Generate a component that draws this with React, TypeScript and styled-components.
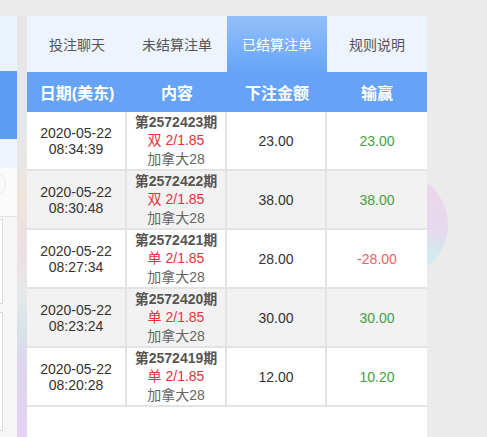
import React from "react";
import styled, { createGlobalStyle } from "styled-components";

const GlobalStyle = createGlobalStyle`
	body {
		margin: 0;
		background: #ebebeb;
		font-family: "Liberation Sans", "Noto Sans CJK SC", sans-serif;
	}
`;

const Page = styled.div`
	position: relative;
	width: 487px;
	height: 437px;
	overflow: hidden;
	display: flex;
	padding-top: 16px;
	box-sizing: border-box;
	background: #ebebeb;
`;

const SidePanel = styled.div`
	width: 17px;
	display: flex;
	flex-direction: column;
	background: #f6f6f6;
`;
const SideTabs = styled.div`
	height: 56px;
	background: #eaf2fd;
`;
const SideBand = styled.div`
	height: 70px;
	background: #5e9df5;
`;
const SideLight = styled.div`
	height: 30px;
	background: #eef4fd;
`;
const SideSearch = styled.div`
	position: relative;
	height: 49px;
	background: #fbfbfb;
	border-bottom: 1px solid #e2e2e2;
	overflow: hidden;
`;
const SideRound = styled.div`
	position: absolute;
	right: 11px;
	top: 5px;
	width: 20px;
	height: 20px;
	border-radius: 50%;
	border: 1px solid #e6e6e6;
`;
const SideBox = styled.div<{ $h: number }>`
	height: ${(p) => p.$h}px;
	margin: 2px 14px 6px -4px;
	background: #fff;
	border: 1px solid #dcdcdc;
`;

const Gutter = styled.div`
	width: 10px;
	background: linear-gradient(
		180deg,
		#e6e6e6 0%,
		#e7e7e7 33%,
		#efe4dc 42%,
		#eee0e4 55%,
		#e6e8ea 66%,
		#d6e4ea 74%,
		#ddd6ec 82%,
		#e4d2f2 100%
	);
`;

const Blob = styled.div`
	position: absolute;
	left: 344px;
	top: 173px;
	width: 104px;
	height: 104px;
	border-radius: 50%;
	background: linear-gradient(200deg, #f0d2ea 0%, #e4d8ee 45%, #cfeaee 60%, #d6eef0 100%);
	opacity: 0.9;
`;

const Panel = styled.div`
	position: relative;
	z-index: 1;
	width: 400px;
	background: #fff;
`;

const Tabs = styled.div`
	display: grid;
	grid-template-columns: repeat(4, 100px);
	height: 56px;
	background: #edf4fe;
`;
const Tab = styled.div<{ $active?: boolean }>`
	display: flex;
	align-items: center;
	justify-content: center;
	font-size: 14px;
	color: ${(p) => (p.$active ? "#fff" : "#555")};
	background: ${(p) =>
		p.$active ? "linear-gradient(180deg, #93bff9 0%, #67a4f8 100%)" : "transparent"};
`;

const Grid = styled.div`
	display: grid;
	grid-template-columns: repeat(4, 100px);
`;
const Head = styled(Grid)`
	height: 40px;
	background: #66a3f7;
`;
const HeadCell = styled.div`
	display: flex;
	align-items: center;
	justify-content: center;
	font-size: 16px;
	font-weight: bold;
	color: #fff;
`;

const Row = styled(Grid)<{ $alt: boolean }>`
	background: ${(p) => (p.$alt ? "#f2f2f2" : "#fff")};
`;
const Cell = styled.div<{ $color?: string }>`
	height: 59px;
	box-sizing: border-box;
	display: flex;
	flex-direction: column;
	align-items: center;
	justify-content: center;
	font-size: 14px;
	line-height: 16px;
	color: ${(p) => p.$color || "#333"};
	border-right: 2px solid #e3e3e3;
	border-bottom: 2px solid #e3e3e3;
	&:last-child {
		border-right: none;
	}
`;
const Line = styled.div<{ $kind: "no" | "pick" | "game" }>`
	line-height: 18.5px;
	font-weight: ${(p) => (p.$kind === "no" ? "bold" : "normal")};
	color: ${(p) => (p.$kind === "no" ? "#555" : p.$kind === "pick" ? "#e6323a" : "#666")};
`;

type Bet = {
	date: string;
	time: string;
	no: string;
	pick: string;
	amount: string;
	win: string;
};

const bets: Bet[] = [
	{ date: "2020-05-22", time: "08:34:39", no: "2572423", pick: "双 2/1.85", amount: "23.00", win: "23.00" },
	{ date: "2020-05-22", time: "08:30:48", no: "2572422", pick: "双 2/1.85", amount: "38.00", win: "38.00" },
	{ date: "2020-05-22", time: "08:27:34", no: "2572421", pick: "单 2/1.85", amount: "28.00", win: "-28.00" },
	{ date: "2020-05-22", time: "08:23:24", no: "2572420", pick: "单 2/1.85", amount: "30.00", win: "30.00" },
	{ date: "2020-05-22", time: "08:20:28", no: "2572419", pick: "单 2/1.85", amount: "12.00", win: "10.20" },
];

const tabs = ["投注聊天", "未结算注单", "已结算注单", "规则说明"];
const heads = ["日期(美东)", "内容", "下注金额", "输赢"];

export default function App() {
	return (
		<Page>
			<GlobalStyle />
			<SidePanel>
				<SideTabs />
				<SideBand />
				<SideLight />
				<SideSearch>
					<SideRound />
				</SideSearch>
				<SideBox $h={86} />
				<SideBox $h={120} />
			</SidePanel>
			<Gutter />
			<Blob />
			<Panel>
				<Tabs>
					{tabs.map((t, i) => (
						<Tab key={t} $active={i === 2}>
							{t}
						</Tab>
					))}
				</Tabs>
				<Head>
					{heads.map((h) => (
						<HeadCell key={h}>{h}</HeadCell>
					))}
				</Head>
				{bets.map((b, i) => (
					<Row key={b.no} $alt={i % 2 === 1}>
						<Cell>
							<div>{b.date}</div>
							<div>{b.time}</div>
						</Cell>
						<Cell>
							<Line $kind="no">第{b.no}期</Line>
							<Line $kind="pick">{b.pick}</Line>
							<Line $kind="game">加拿大28</Line>
						</Cell>
						<Cell>{b.amount}</Cell>
						<Cell $color={b.win.startsWith("-") ? "#ea5f69" : "#45a045"}>{b.win}</Cell>
					</Row>
				))}
			</Panel>
		</Page>
	);
}
